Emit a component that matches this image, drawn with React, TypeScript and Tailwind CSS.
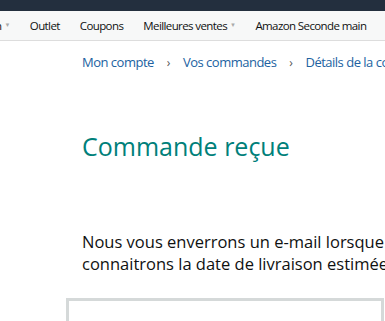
import React from 'react';

const navItems = [
  { label: 'n', caret: true },
  { label: 'Outlet' },
  { label: 'Coupons' },
  { label: 'Meilleures ventes', caret: true },
  { label: 'Amazon Seconde main' },
];

const crumbs = ['Mon compte', 'Vos commandes', 'Détails de la commande'];

export default function App() {
  return (
    <div className="h-[321px] w-[385px] overflow-hidden bg-white font-['Open_Sans',sans-serif]">
      <div className="h-[11px] bg-[#232f3e]" />
      <nav className="-ml-[5px] flex h-[30px] items-center gap-[20px] whitespace-nowrap border-b border-[#dddddd] bg-[#f7f8f8] text-[11.5px] tracking-[-0.6px] text-[#0f1111]">
        {navItems.map((item, i) => (
          <span key={i} className="flex items-center gap-[3px]">
            {item.label}
            {item.caret && <span className="text-[6px] text-[#aaaaaa]">▼</span>}
          </span>
        ))}
      </nav>

      <div className="pl-[82px]">
        <div className="mt-[12px] flex items-center gap-[13px] whitespace-nowrap text-[13px] tracking-[-0.5px] text-[#2162a1]">
          {crumbs.map((c, i) => (
            <React.Fragment key={c}>
              {i > 0 && <span className="text-[12px] text-[#555555]">›</span>}
              <span>{c}</span>
            </React.Fragment>
          ))}
        </div>

        <h1 className="mt-[55px] whitespace-nowrap text-[25px] leading-[36px] text-[#00807a]">
          Commande reçue
        </h1>

        <p className="mt-[67px] whitespace-nowrap text-[16.5px] leading-[22px] text-[#0f1111]">
          Nous vous enverrons un e-mail lorsque nous
          <br />
          connaitrons la date de livraison estimée.
        </p>
      </div>

      <div className="ml-[66px] mt-[23px] h-[60px] w-[318px] border-[3px] border-[#d5d9d9]" />
    </div>
  );
}
